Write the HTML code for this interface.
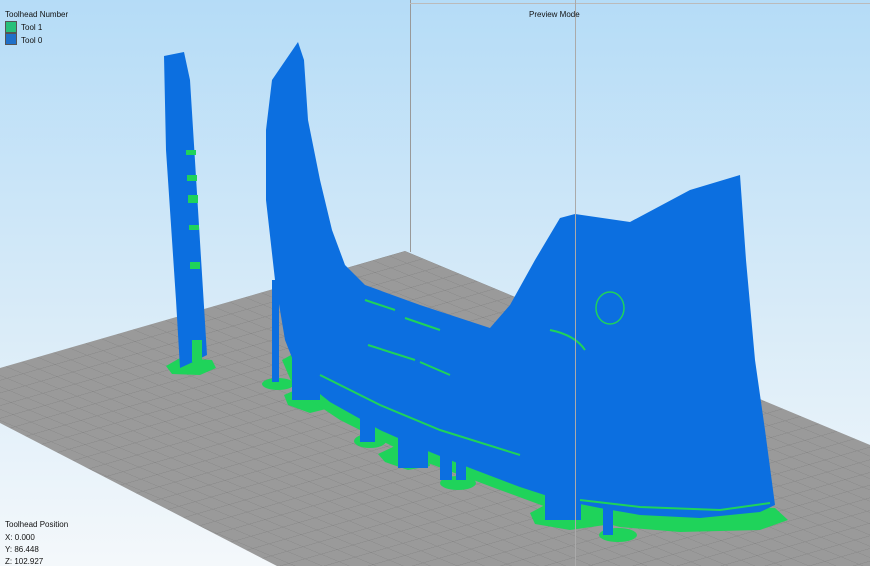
<!DOCTYPE html>
<html><head><meta charset="utf-8"><style>
html,body{margin:0;padding:0;width:870px;height:566px;overflow:hidden;font-family:"Liberation Sans",sans-serif}
.t{position:absolute;font-size:8px;color:#111;}
</style></head><body>
<svg width="870" height="566" style="position:absolute;left:0;top:0">
<defs>
<linearGradient id="sky" x1="0" y1="0" x2="0" y2="1">
<stop offset="0" stop-color="#b5dcf7"/><stop offset="0.55" stop-color="#d8ebf8"/><stop offset="1" stop-color="#f4f8fb"/>
</linearGradient>
<pattern id="grid" patternUnits="userSpaceOnUse" width="1" height="1" patternTransform="matrix(18 7.5 -16 4.6 405 251)">
<rect width="1" height="1" fill="#9a9a9a"/>
<path d="M0 0H1M0 0V1" stroke="#828282" stroke-width="0.06" fill="none"/>
</pattern>
</defs>
<rect width="870" height="566" fill="url(#sky)"/>
<polygon points="405,251 870,445 870,566 277,566 0,423 0,368" fill="url(#grid)"/>
<line x1="410.5" y1="0" x2="410.5" y2="252" stroke="#999" stroke-width="1"/>
<line x1="410" y1="3.5" x2="870" y2="3.5" stroke="#bbb" stroke-width="1"/>
<g fill="#1fd35a">
<polygon points="166,366 180,358 212,360 216,368 200,375 172,374"/>
<ellipse cx="278" cy="384" rx="16" ry="6"/>
<polygon points="284,395 300,388 325,392 330,408 310,413 288,405"/>
<ellipse cx="370" cy="441" rx="16" ry="7"/>
<polygon points="378,454 395,446 425,450 430,466 408,470 385,462"/>
<ellipse cx="458" cy="483" rx="18" ry="7"/>
<polygon points="530,513 545,505 600,508 605,525 570,530 535,524"/>
<ellipse cx="618" cy="535" rx="19" ry="7"/>
<polygon points="282,360 300,350 360,380 450,420 540,460 600,490 700,505 775,508 788,520 760,530 680,532 620,527 560,512 500,490 420,460 340,420 295,390"/>
</g>
<g fill="#0c6fe0">
<polygon points="164,56 184,52 190,80 207,355 193,362 180,368 176,300 166,150"/>
<polygon points="298,42 304,60 308,120 320,180 332,230 345,265 365,285 420,305 490,328 510,305 535,260 560,218 575,214 630,222 690,190 740,175 746,260 755,360 765,430 775,505 760,512 700,518 640,515 600,508 560,500 520,487 470,468 430,452 380,430 330,402 300,378 285,340 275,280 266,200 266,130 272,80"/>
<rect x="272" y="280" width="7" height="102"/>
<rect x="292" y="300" width="28" height="100"/>
<rect x="360" y="350" width="15" height="92"/>
<rect x="398" y="380" width="30" height="88"/>
<rect x="440" y="400" width="12" height="80"/>
<rect x="456" y="400" width="10" height="80"/>
<rect x="545" y="420" width="36" height="100"/>
<rect x="603" y="440" width="10" height="95"/>
</g>
<g fill="#1fd35a">
<rect x="192" y="340" width="10" height="22"/>
<rect x="186" y="150" width="10" height="5"/><rect x="187" y="175" width="10" height="6"/><rect x="188" y="195" width="10" height="8"/><rect x="189" y="225" width="10" height="5"/><rect x="190" y="262" width="10" height="7"/>
</g>
<g stroke="#1fd35a" stroke-width="2" fill="none">
<path d="M365 300 L395 310 M405 318 L440 330"/>
<path d="M368 345 L415 360 M420 362 L450 375"/>
<path d="M320 375 L380 405 L440 430 L520 455"/>
<path d="M550 330 Q575 335 585 350"/>
<path d="M580 500 L640 507 L720 510 L770 503"/>
<ellipse cx="610" cy="308" rx="14" ry="16" stroke-width="1.5"/>
</g>
<line x1="575.5" y1="0" x2="575.5" y2="566" stroke="#aaa" stroke-width="1"/>
</svg>
<div class="t" style="left:5px;top:10px">Toolhead Number</div>
<div style="position:absolute;left:5px;top:21px;width:12px;height:12px;background:#27c07a;border:1px solid #555;box-sizing:border-box"></div>
<div style="position:absolute;left:5px;top:33px;width:12px;height:12px;background:#2070c8;border:1px solid #555;box-sizing:border-box"></div>
<div class="t" style="left:21px;top:23px">Tool 1</div>
<div class="t" style="left:21px;top:36px">Tool 0</div>
<div class="t" style="left:529px;top:10px">Preview Mode</div>
<div class="t" style="left:5px;top:520px">Toolhead Position</div>
<div class="t" style="left:5px;top:533px">X: 0.000</div>
<div class="t" style="left:5px;top:545px">Y: 86.448</div>
<div class="t" style="left:5px;top:557px">Z: 102.927</div>
</body></html>
